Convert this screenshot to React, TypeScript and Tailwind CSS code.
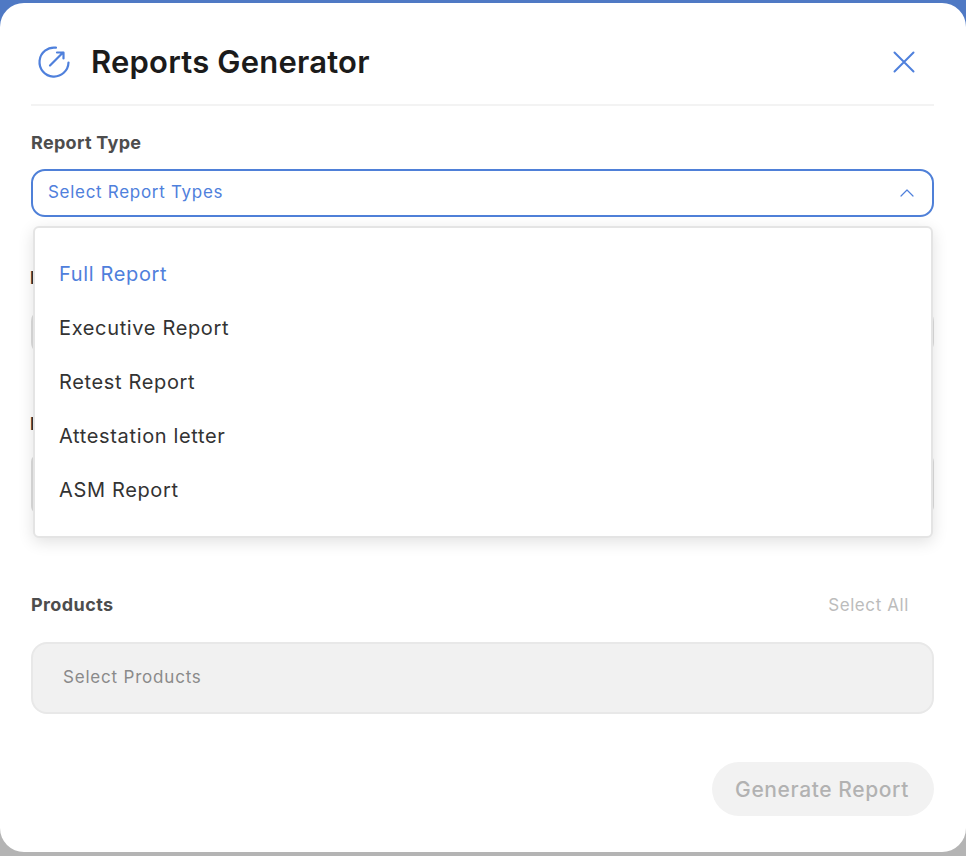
const font = "font-['Inter','Noto_Sans',sans-serif]";

const options = [
  "Full Report",
  "Executive Report",
  "Retest Report",
  "Attestation letter",
  "ASM Report",
];

function ReportIcon() {
  return (
    <svg width="34" height="34" viewBox="0 0 34 34" fill="none" stroke="#4f80dc" strokeWidth="2.2" strokeLinecap="round" strokeLinejoin="round">
      <path d="M19 2.7A14.5 14.5 0 1 0 31.5 17.5" />
      <path d="M13 20.5L26 7.5M20 7.5h6.5v6" />
    </svg>
  );
}

function CloseIcon() {
  return (
    <svg width="22" height="22" viewBox="0 0 22 22" fill="none" stroke="#4f80dc" strokeWidth="2" strokeLinecap="round">
      <path d="M1.5 1.5l19 19M20.5 1.5l-19 19" />
    </svg>
  );
}

function ChevronUp() {
  return (
    <svg width="14" height="8" viewBox="0 0 14 8" fill="none" stroke="#4f80dc" strokeWidth="1.2" strokeLinecap="round" strokeLinejoin="round">
      <path d="M1 7l6-6 6 6" />
    </svg>
  );
}

export default function App() {
  return (
    <div className={`h-[856px] w-full bg-[linear-gradient(#4f79c4_50%,#b4b4b4_50%)] pt-[3px] pb-[4px] ${font}`}>
      <div className="relative h-full rounded-[24px] bg-white pl-[31px] pr-[32px]">
        <div className="flex h-[103px] items-center justify-between border-b-2 border-[#f3f3f3] pt-[17px] pl-[6px] pr-[19px]">
          <div className="flex items-center gap-[20px]">
            <ReportIcon />
            <h1 className="text-[31px] font-semibold tracking-[0.2px] text-[#1b1b1b]">Reports Generator</h1>
          </div>
          <CloseIcon />
        </div>

        <div className="mt-[25px] text-[18px] leading-[24px] font-bold tracking-[0.3px] text-[#4d4d4d]">Report Type</div>
        <div className="mt-[14px] flex h-[48px] items-center justify-between rounded-[14px] border-2 border-[#4f80d8] pl-[15px] pr-[18px]">
          <span className="text-[17px] tracking-[0.7px] text-[#4f80dc]">Select Report Types</span>
          <ChevronUp />
        </div>

        {/* these two rows sit behind the open menu, only a sliver of each shows */}
        <div className="mt-[47px] -ml-[1px] h-[22px] text-[18px] font-bold text-[#333333]">Report Name</div>
        <div className="mt-[22px] h-[48px] rounded-[14px] border-2 border-[#dddddd]" />

        <div className="mt-[54px] -ml-[1px] h-[22px] text-[18px] font-bold text-[#333333]">Project</div>
        <div className="mt-[22px] h-[60px] rounded-[8px] border-2 border-[#dddddd]" />

        <div className="mt-[78px] flex h-[24px] items-center justify-between pr-[25px]">
          <span className="text-[18px] font-bold tracking-[0.4px] text-[#4d4d4d]">Products</span>
          <span className="mt-[4px] text-[17px] tracking-[0.6px] text-[#bcbcbc]">Select All</span>
        </div>
        <div className="mt-[26px] flex h-[72px] items-center rounded-[16px] border-2 border-[#e8e8e8] bg-[#f1f1f1] pl-[30px]">
          <span className="text-[17px] tracking-[0.8px] text-[#8a8a8a]">Select Products</span>
        </div>

        <div className="mt-[48px] flex justify-end">
          <div className="flex h-[54px] w-[222px] items-center justify-center rounded-full bg-[#f2f2f2] pt-[1px] pr-[2px] text-[21px] font-medium tracking-[0.6px] text-[#b2b2b2]">
            Generate Report
          </div>
        </div>

        <div className="absolute top-[223px] left-[33px] right-[33px] h-[312px] rounded-[6px] border-2 border-[#e4e4e4] bg-white pt-[19px] pl-[24px] shadow-[0_4px_16px_rgba(0,0,0,0.12)]">
          {options.map((o, i) => (
            <div key={o} className={`flex h-[54px] items-center text-[20px] tracking-[0.65px] ${i === 0 ? "text-[#4f80dc]" : "text-[#333333]"}`}>
              {o}
            </div>
          ))}
        </div>
      </div>
    </div>
  );
}
